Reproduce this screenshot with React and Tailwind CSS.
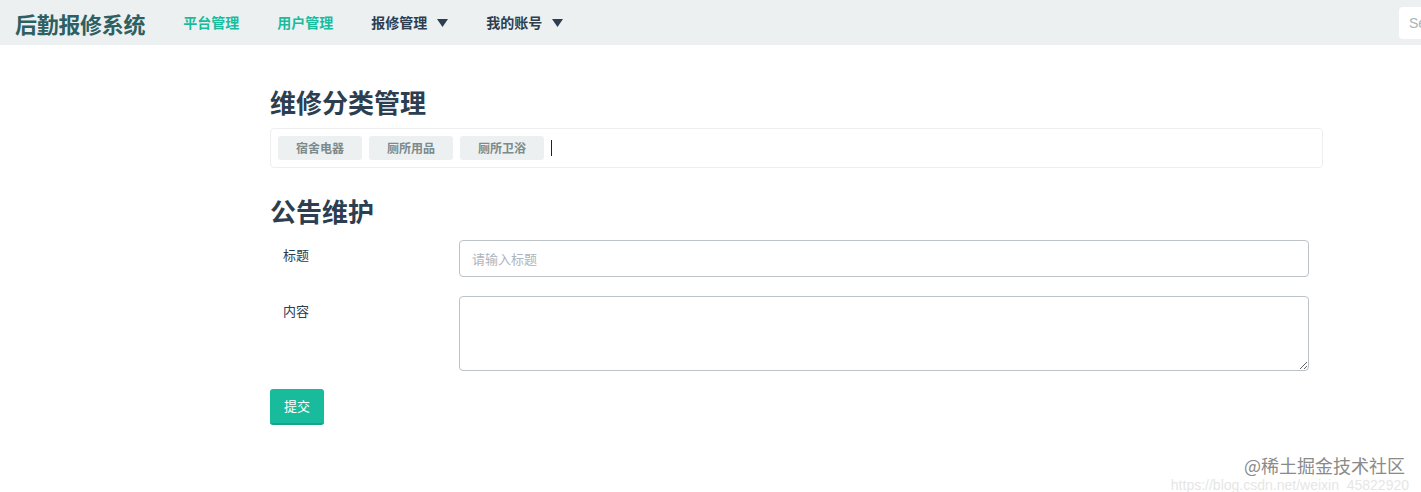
import React from "react";

const font = { fontFamily: '"Noto Sans CJK SC", "Liberation Sans", sans-serif' };

function Caret() {
  return (
    <svg width="11" height="8" viewBox="0 0 11 8" className="ml-[10px]">
      <path d="M0 0 L11 0 L5.5 8 Z" fill="#2c3e50" />
    </svg>
  );
}

export default function App() {
  return (
    <div className="relative min-h-[492px] bg-white overflow-hidden" style={font}>
      <nav className="flex h-[45px] items-center bg-[#ecf0f1] overflow-hidden">
        <div className="ml-[15px] text-[22px] font-bold leading-none text-[#2e5f62] tracking-[-0.3px]">
          后勤报修系统
        </div>
        <a className="ml-[38px] text-[14px] font-bold text-[#18bc9c]">平台管理</a>
        <a className="ml-[38px] text-[14px] font-bold text-[#18bc9c]">用户管理</a>
        <a className="ml-[38px] flex items-center text-[14px] font-bold text-[#2c3e50]">
          报修管理
          <Caret />
        </a>
        <a className="ml-[38px] flex items-center text-[14px] font-bold text-[#2c3e50]">
          我的账号
          <Caret />
        </a>
        <div className="ml-auto w-[22px] shrink-0 overflow-hidden">
          <input
            className="h-[32px] w-[200px] rounded-[4px] bg-white pl-[10px] text-[14px] outline-none placeholder:text-[#aab3b8]"
            placeholder="Search"
            style={{ fontFamily: '"Liberation Sans", sans-serif' }}
          />
        </div>
      </nav>

      <main className="ml-[270px] w-[1053px]">
        <h2 className="mt-[40px] text-[26px] font-bold leading-[34px] text-[#2c3e50]">维修分类管理</h2>
        <div className="mt-[9px] flex h-[40px] items-center gap-[7px] rounded-[4px] border border-[#eceeef] px-[7px]">
          {["宿舍电器", "厕所用品", "厕所卫浴"].map((t) => (
            <span
              key={t}
              className="flex h-[24px] w-[84px] items-center justify-center rounded-[3px] bg-[#ecf0f1] text-[12px] font-bold text-[#7b8a8b]"
            >
              {t}
            </span>
          ))}
          <span className="h-[16px] w-px bg-[#222]" />
        </div>

        <h2 className="mt-[26px] text-[26px] font-bold leading-[34px] text-[#2c3e50]">公告维护</h2>

        <div className="mt-[12px] flex pl-[13px] pr-[14px]">
          <label className="w-[176px] pt-[5px] text-[13px] text-[#2c3e50]">标题</label>
          <input
            className="h-[37px] flex-1 rounded-[4px] border border-[#bdc3c7] px-[12px] text-[13px] outline-none placeholder:text-[#acb5bd]"
            placeholder="请输入标题"
          />
        </div>
        <div className="mt-[19px] flex pl-[13px] pr-[14px]">
          <label className="w-[176px] pt-[5px] text-[13px] text-[#2c3e50]">内容</label>
          <textarea className="h-[75px] flex-1 rounded-[4px] border border-[#bdc3c7] px-[12px] py-[8px] text-[13px] outline-none" />
        </div>
        <button className="mt-[18px] h-[36px] w-[54px] rounded-[3px] border-b-2 border-[#15a589] bg-[#18bc9c] text-[13px] text-white">
          提交
        </button>
      </main>

      <div
        className="absolute right-[12px] top-[479px] text-[14px] leading-[12px] text-[#e6e6e6]"
        style={{ fontFamily: '"Liberation Sans", sans-serif' }}
      >
        https://blog.csdn.net/weixin_45822920
      </div>
      <div className="absolute right-[16px] top-[456px] text-[18px] leading-[18px] text-[#8a8a8a]">
        @稀土掘金技术社区
      </div>
    </div>
  );
}
